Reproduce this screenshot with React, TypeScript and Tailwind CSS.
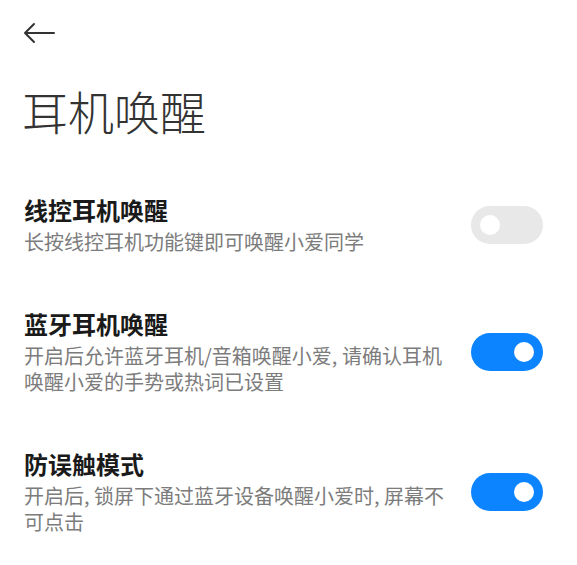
import React from "react";

const font = { fontFamily: '"Noto Sans CJK SC", "Noto Sans", sans-serif' };

function Toggle({ on }: { on: boolean }) {
  return (
    <div
      className={`flex h-[38px] w-[72px] shrink-0 items-center rounded-full px-[9px] ${
        on ? "justify-end bg-[#0d84ff]" : "justify-start bg-[#e8e8e8]"
      }`}
    >
      <div className="h-[20px] w-[20px] rounded-full bg-white" />
    </div>
  );
}

const items = [
  {
    title: "线控耳机唤醒",
    desc: "长按线控耳机功能键即可唤醒小爱同学",
    on: false,
  },
  {
    title: "蓝牙耳机唤醒",
    desc: "开启后允许蓝牙耳机/音箱唤醒小爱, 请确认耳机唤醒小爱的手势或热词已设置",
    on: true,
  },
  {
    title: "防误触模式",
    desc: "开启后, 锁屏下通过蓝牙设备唤醒小爱时, 屏幕不可点击",
    on: true,
  },
];

export default function App() {
  return (
    <div className="min-h-[565px] w-full bg-white" style={font}>
      <div className="px-[23px] pt-[22px]">
        <svg width="32" height="22" viewBox="0 0 32 22" fill="none">
          <path
            d="M31 11H2M11 2L2 11L11 20"
            stroke="#333"
            strokeWidth="2"
            strokeLinecap="round"
            strokeLinejoin="round"
          />
        </svg>
      </div>
      <h1 className="mt-[38px] px-[22px] text-[46px] font-light leading-[56px] text-[#333]">
        耳机唤醒
      </h1>
      <div className="mt-[56px] flex flex-col gap-[53px]">
        {items.map((it) => (
          <div key={it.title} className="flex items-center pl-[24px] pr-[34px]">
            <div className="w-[428px]">
              <div className="text-[24px] font-bold leading-[32px] text-[#1a1a1a]">
                {it.title}
              </div>
              <div className="mt-[3px] text-[20px] leading-[26px] text-[#7c7c7c]">
                {it.desc}
              </div>
            </div>
            <div className="ml-auto">
              <Toggle on={it.on} />
            </div>
          </div>
        ))}
      </div>
    </div>
  );
}
